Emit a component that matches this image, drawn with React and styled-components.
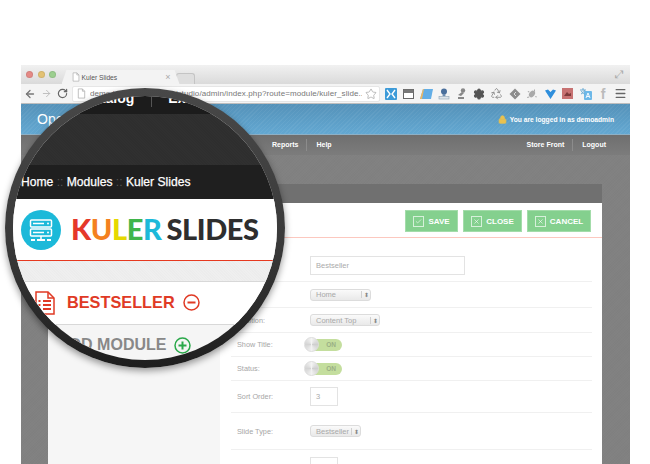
import React from 'react'
import styled, { createGlobalStyle } from 'styled-components'
import { ArrowLeft, ArrowRight, RotateCw, Star, Settings, Recycle, Menu as MenuIcon, Lock, Check, X } from 'lucide-react'

const Global = createGlobalStyle`
  html, body { margin: 0; padding: 0; background: #fff; }
  body { font-family: "Liberation Sans", Arial, sans-serif; }
  * { box-sizing: border-box; }
`

const DocGlyph = ({ color = '#aaa', size = 12 }) => (
  <svg width={size} height={size} viewBox="0 0 12 12" fill="#fff" stroke={color} strokeWidth="0.8">
    <path d="M2.5 1h4.5l2.5 2.5V11h-7z" />
    <path d="M7 1v2.5h2.5" fill="none" />
  </svg>
)

const ExtensionIcons = () => (
  <Extensions>
    <svg width="12" height="12" viewBox="0 0 12 12">
      <rect width="12" height="12" rx="1" fill="#3d9bd8" />
      <path d="M2 2l3 4-3 4M10 2L7 6l3 4" fill="none" stroke="#fff" strokeWidth="1.4" />
    </svg>
    <svg width="11" height="10" viewBox="0 0 11 10">
      <rect x=".5" y=".5" width="10" height="9" fill="#fff" stroke="#666" />
      <rect x=".5" y=".5" width="10" height="3.5" fill="#777" />
    </svg>
    <svg width="13" height="10" viewBox="0 0 13 10">
      <path d="M3 0h10l-2 10H0z" fill="#63aee6" />
      <path d="M0 10l3-10h1L2 10z" fill="#f0b860" />
    </svg>
    <svg width="12" height="12" viewBox="0 0 12 12">
      <circle cx="6" cy="3.5" r="3" fill="#4a6f9c" />
      <rect x="4.6" y="6" width="2.8" height="2.4" fill="#6d8cb0" />
      <rect x="1" y="8.4" width="10" height="2.6" fill="#dde4ea" stroke="#8fa3b5" strokeWidth=".6" />
    </svg>
    <svg width="11" height="12" viewBox="0 0 11 12" fill="#888">
      <circle cx="7" cy="2.5" r="2.2" />
      <path d="M2 7l4-3 2 1-3 3zM2 9h6v2H2z" />
    </svg>
    <Settings size={12} color="#555" fill="#555" strokeWidth={2.4} />
    <Recycle size={13} color="#888" strokeWidth={1.6} />
    <svg width="12" height="12" viewBox="0 0 12 12">
      <path d="M6 .5L11.5 6 6 11.5.5 6z" fill="#8c8c8c" />
      <path d="M7 4L5 6l2 2" fill="none" stroke="#ddd" />
    </svg>
    <svg width="12" height="12" viewBox="0 0 12 12" fill="#aaa">
      <ellipse cx="6" cy="6" rx="2.6" ry="3.6" transform="rotate(40 6 6)" />
      <path d="M8 1.5l1 0 0 2-1 0zM1 9l2-.6.3 1-2 .6zM10 8l1 1-1 .6-1-1zM2 3l1.5.5-.3 1L1.7 4z" />
    </svg>
    <svg width="11" height="10" viewBox="0 0 11 10">
      <path d="M0 1.5L3 .5 5.500 3 8 .5l3 1-5.500 8.500z" fill="#2f8fdc" />
    </svg>
    <svg width="11" height="11" viewBox="0 0 11 11">
      <rect width="11" height="11" fill="#c77272" />
      <path d="M2 8l3-4 2 2 2-1v3z" fill="#7d3a3a" />
    </svg>
    <svg width="13" height="13" viewBox="0 0 13 13">
      <rect x="5" y="4" width="8" height="9" rx="1" fill="#6db8e8" />
      <path d="M7 11l2-5 2 5M7.8 9.5h2.4" fill="none" stroke="#fff" strokeWidth=".9" />
      <path d="M1 3h6M4 1v2M2 7c2-1 3-2 3.5-4M2.5 4c.5 1.5 1.5 2.5 3 3" fill="none" stroke="#5ba3cf" strokeWidth=".9" />
    </svg>
    <FGlyph>f</FGlyph>
    <MenuIcon size={13} color="#666" strokeWidth={2.4} />
  </Extensions>
)

const Field = ({ label, height, children }) => (
  <Row $height={height}>
    <Label>{label}</Label>
    {children}
  </Row>
)

const Toggle = () => (
  <Switch>
    <Knob />
    <OnText>ON</OnText>
  </Switch>
)

const Select = ({ value, width }) => (
  <SelectBox $width={width}>
    <span>{value}</span>
    <SelectArrows>⬍</SelectArrows>
  </SelectBox>
)

const App = () => {
  return (
    <Page>
      <Global />
      <Browser>
        <TabBar>
          <Light $c="#e58a86" />
          <Light $c="#e3c274" />
          <Light $c="#9ccf8f" />
          <Tab>
            <DocGlyph size={10} />
            <TabTitle>Kuler Slides</TabTitle>
            <TabClose>×</TabClose>
          </Tab>
          <GhostTab />
          <Expand>⤢</Expand>
        </TabBar>

        <Toolbar>
          <NavButtons>
            <ArrowLeft size={12} color="#777" strokeWidth={2.6} />
            <ArrowRight size={11} color="#bbb" strokeWidth={2} />
            <RotateCw size={11} color="#666" strokeWidth={2.6} />
          </NavButtons>
          <Address>
            <DocGlyph size={11} />
            <Url>demo.kulerthemes.com/studio/admin/index.php?route=module/kuler_slide...</Url>
            <Star size={12} color="#999" strokeWidth={1.3} />
          </Address>
          <ExtensionIcons />
        </Toolbar>

        <SiteHeader>
          <SiteName>OpenCart</SiteName>
          <LoggedIn>
            <Lock size={9} color="#e9c14f" fill="#e9c14f" />
            You are logged in as demoadmin
          </LoggedIn>
        </SiteHeader>

        <SiteMenu>
          <MenuLink $divider>Reports</MenuLink>
          <MenuLink>Help</MenuLink>
          <MenuSpacer />
          <MenuLink $divider>Store Front</MenuLink>
          <MenuLink>Logout</MenuLink>
        </SiteMenu>

        <Content>
          <Panel>
            <PanelHead />
            <PanelTop>
              <Button $width={53}><Check size={10} strokeWidth={2} /><span>SAVE</span></Button>
              <Button $width={59}><X size={10} strokeWidth={2} /><span>CLOSE</span></Button>
              <Button $width={64}><X size={10} strokeWidth={2} /><span>CANCEL</span></Button>
            </PanelTop>
            <PanelBody>
              <Sidebar />
              <Form>
                <NameRow><Label>Name:</Label><TextInput $width={155}>Bestseller</TextInput></NameRow>
                <Field label="Layout:" height={26}><Select value="Home" width={61} /></Field>
                <Field label="Position:" height={25}><Select value="Content Top" width={70} /></Field>
                <Field label="Show Title:" height={24}><Toggle /></Field>
                <Field label="Status:" height={24}><Toggle /></Field>
                <Field label="Sort Order:" height={32}><TextInput $width={28}>3</TextInput></Field>
                <Field label="Slide Type:" height={37}><Select value="Bestseller" width={51} /></Field>
                <Field label="Slide Limit:" height={33}><TextInput $width={28}>4</TextInput></Field>
              </Form>
            </PanelBody>
          </Panel>
        </Content>
      </Browser>

      <Lens>
        <LensInner>
          <LensNav>
            <LensNavItem $divider>Catalog</LensNavItem>
            <LensNavItem>Extensions</LensNavItem>
          </LensNav>
          <LensTexture />
          <Breadcrumb>Home <i>::</i> Modules <i>::</i> Kuler Slides</Breadcrumb>
          <LogoRow>
            <svg width="40" height="40" viewBox="0 0 40 40">
              <circle cx="20" cy="20" r="20" fill="#1cb9d9" />
              <rect x="9.5" y="10" width="21" height="7" rx="1" fill="none" stroke="#fff" strokeWidth="1.5" />
              <rect x="9.5" y="19" width="21" height="7" rx="1" fill="none" stroke="#fff" strokeWidth="1.5" />
              <path d="M12 13.5h11M12 22.5h11" stroke="#fff" strokeWidth="1.5" />
              <circle cx="27" cy="13.5" r="1" fill="#fff" />
              <circle cx="27" cy="22.5" r="1" fill="#fff" />
              <path d="M20 26v3" stroke="#fff" strokeWidth="1.5" />
              <path d="M10 30h4M16 30h8M26 30h4" stroke="#fff" strokeWidth="1.8" />
            </svg>
            <LogoText>
              <Letter $c="#e5382a">K</Letter>
              <Letter $c="#f4811f">U</Letter>
              <Letter $c="#e6d800">L</Letter>
              <Letter $c="#3fb54a">E</Letter>
              <Letter $c="#1cb9d9">R</Letter>
              <LogoSlides>SLIDES</LogoSlides>
            </LogoText>
          </LogoRow>
          <GreyBand />
          <ModuleRow>
            <svg width="20" height="24" viewBox="0 0 20 24" fill="none" stroke="#e03a25" strokeWidth="1.5">
              <path d="M1 1h12l6 6v16H1z" />
              <path d="M13 1v6h6" />
              <path d="M8 10h8M8 14h8M8 18h8M3.5 10h2M3.5 14h2M3.5 18h2" strokeWidth="1.8" />
            </svg>
            <ModuleName>BESTSELLER</ModuleName>
            <svg width="17" height="17" viewBox="0 0 17 17" fill="none" stroke="#e03a25" strokeWidth="1.5">
              <circle cx="8.5" cy="8.5" r="7.5" />
              <path d="M4.5 8.5h8" strokeWidth="2" />
            </svg>
          </ModuleRow>
          <AddRow>
            <AddName>ADD MODULE</AddName>
            <svg width="17" height="17" viewBox="0 0 17 17" fill="none" stroke="#2aa84a" strokeWidth="1.5">
              <circle cx="8.5" cy="8.5" r="7.5" />
              <path d="M4.5 8.5h8M8.500 4.5v8" strokeWidth="2" />
            </svg>
          </AddRow>
        </LensInner>
      </Lens>
    </Page>
  )
}

export default App

const Page = styled.div`
  position: relative;
  width: 650px;
  height: 464px;
  overflow: hidden;
  padding: 65px 0 0 21px;
  background: #fff;
`
const Browser = styled.div`
  width: 609px;
  height: 399px;
  overflow: hidden;
  background: #7f7f7f;
  display: flex;
  flex-direction: column;
`
const TabBar = styled.div`
  height: 19px;
  flex: none;
  display: flex;
  align-items: center;
  padding: 0 6px 0 5px;
  gap: 4.5px;
  background: linear-gradient(#f1f1f1, #dadada);
`
const Light = styled.span`
  width: 7px;
  height: 7px;
  border-radius: 50%;
  background: ${p => p.$c};
  border: 1px solid rgba(0, 0, 0, 0.08);
`
const Tab = styled.div`
  height: 14px;
  width: 118px;
  margin: 5px 0 0 1px;
  padding: 0 9px 0 9px;
  display: flex;
  align-items: center;
  gap: 1px;
  background: #f3f3f3;
  clip-path: polygon(0 100%, 5px 0, calc(100% - 5px) 0, 100% 100%);
`
const TabTitle = styled.span`
  font-size: 6.7px;
  color: #555;
  flex: 1;
`
const TabClose = styled.span`
  font-size: 9px;
  color: #aaa;
`
const GhostTab = styled.div`
  width: 19px;
  height: 11px;
  margin: 8px 0 0 -8px;
  background: #dedede;
  border: 1px solid #c4c4c4;
  border-bottom: none;
  border-radius: 3px 3px 0 0;
`
const Expand = styled.span`
  margin-left: auto;
  font-size: 11px;
  line-height: 1;
  color: #aaa;
`
const Toolbar = styled.div`
  height: 20px;
  flex: none;
  display: flex;
  align-items: center;
  padding-left: 1px;
  background: #f4f4f4;
  border-bottom: 1px solid #bdbdbd;
`
const NavButtons = styled.div`
  display: grid;
  grid-template-columns: repeat(3, 16px);
  justify-items: center;
  align-items: center;
`
const Address = styled.div`
  width: 308px;
  height: 16px;
  margin-left: 2px;
  padding: 0 2px 0 3px;
  display: flex;
  align-items: center;
  gap: 3px;
  background: #fff;
  border-radius: 2px;
  border: 1px solid #e6e6e6;
`
const Url = styled.span`
  flex: 1;
  min-width: 0;
  white-space: nowrap;
  overflow: hidden;
  font-size: 8px;
  letter-spacing: 0.1px;
  color: #777;
`
const Extensions = styled.div`
  display: grid;
  grid-template-columns: repeat(14, 17.7px);
  justify-items: center;
  align-items: center;
  margin-left: 2px;
`
const FGlyph = styled.span`
  font: bold 14px "Liberation Sans", sans-serif;
  line-height: 1;
  color: #bbb;
`
const SiteHeader = styled.div`
  height: 31px;
  flex: none;
  padding: 0 16px;
  display: flex;
  align-items: center;
  justify-content: space-between;
  background:
    repeating-linear-gradient(135deg, rgba(255, 255, 255, 0.05) 0 1px, transparent 1px 3px),
    linear-gradient(#5592b9, #63a8d2);
  border-bottom: 1px solid #8db0c6;
`
const SiteName = styled.span`
  font-size: 14px;
  color: #fff;
`
const LoggedIn = styled.span`
  display: flex;
  align-items: center;
  gap: 3px;
  font-size: 6.7px;
  font-weight: bold;
  color: #fff;
`
const SiteMenu = styled.div`
  height: 20px;
  flex: none;
  padding: 0 24px 0 251px;
  display: flex;
  align-items: center;
  background: linear-gradient(#6f6f6f, #7c7c7c);
`
const MenuLink = styled.span`
  font-size: 7px;
  font-weight: bold;
  color: #fff;
  padding-right: 8px;
  margin-right: 9px;
  line-height: 12px;
  border-right: ${p => (p.$divider ? '1px solid #8c8c8c' : 'none')};

  &:last-child { padding-right: 0; margin-right: 0; }
`
const MenuSpacer = styled.div`
  flex: 1;
`
const Content = styled.div`
  flex: 1;
  padding: 29px 28px 0 27px;
  background:
    repeating-linear-gradient(45deg, rgba(255, 255, 255, 0.012) 0 1px, transparent 1px 2px),
    repeating-linear-gradient(-45deg, rgba(0, 0, 0, 0.012) 0 1px, transparent 1px 2px),
    #818181;
`
const Panel = styled.div`
  width: 554px;
  height: 100%;
  display: flex;
  flex-direction: column;
  background: #fff;
`
const PanelHead = styled.div`
  height: 19px;
  flex: none;
  background: #707070;
`
const PanelTop = styled.div`
  height: 35px;
  flex: none;
  display: flex;
  justify-content: flex-end;
  gap: 5px;
  padding: 7px 11px 0 0;
  border-bottom: 1px solid #fcc8bf;
`
const Button = styled.div`
  width: ${p => p.$width}px;
  height: 22px;
  display: flex;
  align-items: center;
  justify-content: center;
  gap: 4px;
  background: #84d08e;
  border: 1px solid #a3dcaa;
  color: #fff;
  font-size: 8px;
  font-weight: bold;

  svg { border: 1px solid #d6f0da; width: 11px; height: 11px; padding: 1px; }
`
const PanelBody = styled.div`
  flex: 1;
  display: flex;
`
const Sidebar = styled.div`
  width: 172px;
  flex: none;
  background: #f6f6f6;
`
const Form = styled.div`
  width: 361px;
  margin-left: 11px;
`
const Row = styled.div`
  height: ${p => p.$height}px;
  display: flex;
  align-items: center;
  padding-left: 6px;
  border-bottom: 1px solid #f0f0f0;
`
const NameRow = styled(Row)`
  height: 44px;
  padding-top: 12px;
`
const Label = styled.span`
  width: 73px;
  flex: none;
  font-size: 7.3px;
  color: #a6a6a6;
`
const TextInput = styled.div`
  width: ${p => p.$width}px;
  height: 19px;
  line-height: 17px;
  padding-left: 5px;
  font-size: 7.5px;
  color: #aaa;
  background: #fff;
  border: 1px solid #e3e3e3;
`
const SelectBox = styled.div`
  width: ${p => p.$width}px;
  height: 12px;
  padding-left: 5px;
  display: flex;
  align-items: center;
  justify-content: space-between;
  font-size: 7.5px;
  color: #a8a8a8;
  white-space: nowrap;
  background: linear-gradient(#fafafa, #e9e9e9);
  border: 1px solid #dcdcdc;
  border-radius: 3px;
`
const SelectArrows = styled.span`
  width: 9px;
  text-align: center;
  font-size: 6px;
  color: #888;
  border-left: 1px solid #d0d0d0;
`
const Switch = styled.div`
  width: 38px;
  height: 12px;
  margin-left: -6px;
  position: relative;
  display: flex;
  align-items: center;
  justify-content: flex-end;
  padding-right: 6px;
  background: linear-gradient(90deg, transparent 6px, #c4de9e 6px);
  border-radius: 6px;
`
const Knob = styled.span`
  position: absolute;
  left: 0;
  top: -2px;
  width: 15px;
  height: 15px;
  border-radius: 50%;
  border: 1px solid #ddd;
  background: conic-gradient(#f4f4f4, #cfcfcf, #f2f2f2, #d4d4d4, #f4f4f4);
`
const OnText = styled.span`
  font-size: 6.5px;
  font-weight: bold;
  color: #9aaf85;
`
const Lens = styled.div`
  position: absolute;
  left: 5px;
  top: 88px;
  width: 280px;
  height: 280px;
  padding: 8px;
  border-radius: 50%;
  background: linear-gradient(180deg, #484848, #3a3a3a 55%, #1e1e1e);
  box-shadow: 0 3px 7px rgba(0, 0, 0, 0.4);
`
const LensInner = styled.div`
  width: 264px;
  height: 264px;
  border-radius: 50%;
  overflow: hidden;
  background: #f5f5f5;
  display: flex;
  flex-direction: column;
`
const LensNav = styled.div`
  height: 18px;
  flex: none;
  padding: 0 0 7px 70px;
  display: flex;
  align-items: flex-end;
  background: #1c1c1c;
`
const LensNavItem = styled.span`
  font-size: 14px;
  font-weight: bold;
  line-height: 18px;
  color: #fff;
  padding-right: ${p => (p.$divider ? 17 : 0)}px;
  margin-right: ${p => (p.$divider ? 16 : 0)}px;
  border-right: ${p => (p.$divider ? '1px solid #555' : 'none')};
`
const LensTexture = styled.div`
  height: 51px;
  flex: none;
  background:
    repeating-linear-gradient(45deg, rgba(255, 255, 255, 0.012) 0 1px, transparent 1px 2px),
    #2e2e2e;
`
const Breadcrumb = styled.div`
  height: 34px;
  flex: none;
  padding-left: 8px;
  line-height: 34px;
  font-size: 12.1px;
  color: #fff;
  -webkit-text-stroke: 0.25px #fff;
  white-space: pre;
  background: #1f1f1f;

  i { font-style: normal; color: #555; -webkit-text-stroke: 0; }
`
const LogoRow = styled.div`
  height: 62px;
  flex: none;
  padding-left: 8px;
  display: flex;
  align-items: center;
  gap: 10px;
  background: #fff;
  border-bottom: 1px solid #e6391f;
`
const LogoText = styled.div`
  margin-top: -2px;
  font-family: Lato, sans-serif;
  font-weight: 900;
  font-size: 29px;
  line-height: 1;
  letter-spacing: -0.4px;
  white-space: nowrap;
`
const Letter = styled.span`
  color: ${p => p.$c};
`
const LogoSlides = styled.span`
  margin-left: 5px;
  color: #2e2e2e;
`
const GreyBand = styled.div`
  height: 21px;
  flex: none;
  background:
    repeating-linear-gradient(45deg, rgba(0, 0, 0, 0.012) 0 1px, transparent 1px 2px),
    #efefef;
  border-bottom: 1px solid #d8d8d8;
`
const ModuleRow = styled.div`
  height: 43px;
  flex: none;
  padding: 0 0 1px 22px;
  display: flex;
  align-items: center;
  background: #fff;
  border-bottom: 1px solid #d8d8d8;

  svg:last-child { margin-left: 8px; }
`
const ModuleName = styled.span`
  margin-left: 12px;
  font-size: 16.3px;
  font-weight: bold;
  color: #e03a25;
`
const AddRow = styled.div`
  height: 40px;
  flex: none;
  padding-left: 45px;
  display: flex;
  align-items: center;
  gap: 8px;
`
const AddName = styled.span`
  font-size: 16px;
  font-weight: bold;
  color: #888;
`
